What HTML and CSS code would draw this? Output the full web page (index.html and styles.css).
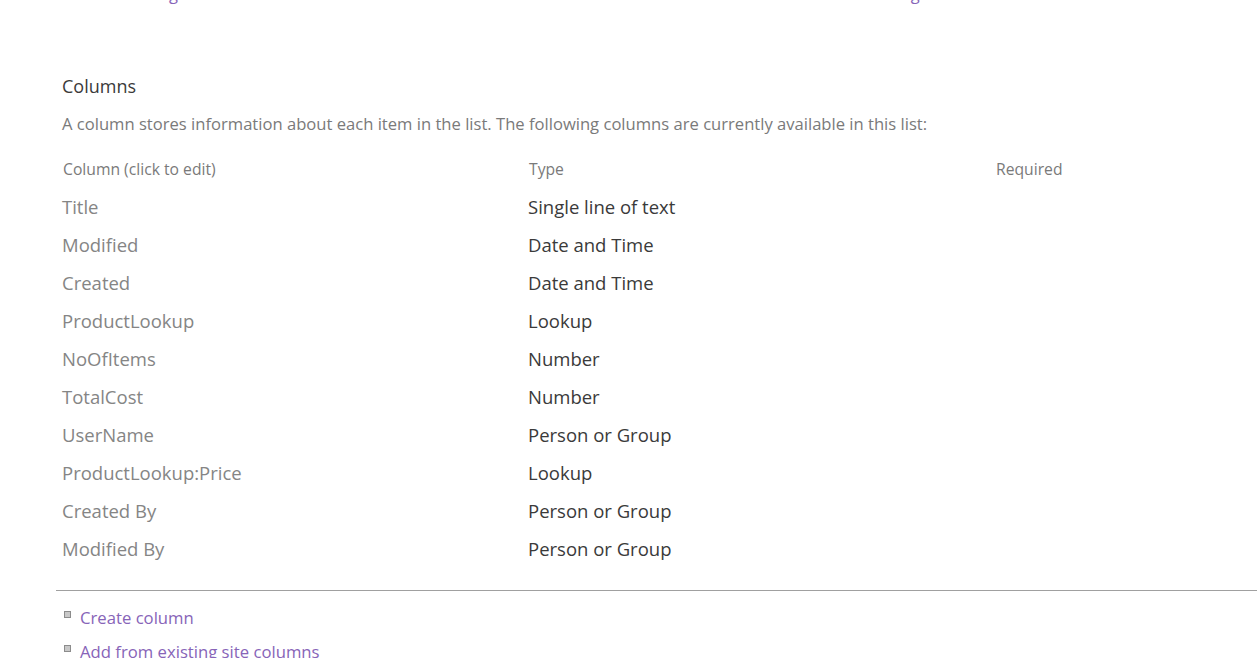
FILE: index.html
```html
<!DOCTYPE html>
<html>
<head>
<meta charset="utf-8">
<link rel="stylesheet" href="styles.css">
</head>
<body>
<div class="page">
  <div class="toplinks">
    <a class="toplink left">Form settings</a>
    <a class="toplink right">Workflow Settings</a>
  </div>
  <section class="columns">
    <h2 class="title">Columns</h2>
    <p class="desc">A column stores information about each item in the list. The following columns are currently available in this list:</p>
    <div class="grid">
      <div class="head">Column (click to edit)</div>
      <div class="head">Type</div>
      <div class="head">Required</div>

      <div class="name">Title</div><div class="type">Single line of text</div><div class="req"></div>
      <div class="name">Modified</div><div class="type">Date and Time</div><div class="req"></div>
      <div class="name">Created</div><div class="type">Date and Time</div><div class="req"></div>
      <div class="name">ProductLookup</div><div class="type">Lookup</div><div class="req"></div>
      <div class="name">NoOfItems</div><div class="type">Number</div><div class="req"></div>
      <div class="name">TotalCost</div><div class="type">Number</div><div class="req"></div>
      <div class="name">UserName</div><div class="type">Person or Group</div><div class="req"></div>
      <div class="name">ProductLookup:Price</div><div class="type">Lookup</div><div class="req"></div>
      <div class="name">Created By</div><div class="type">Person or Group</div><div class="req"></div>
      <div class="name">Modified By</div><div class="type">Person or Group</div><div class="req"></div>
    </div>
  </section>
  <hr class="sep">
  <ul class="actions">
    <li><span class="bullet"></span><a>Create column</a></li>
    <li><span class="bullet"></span><a>Add from existing site columns</a></li>
  </ul>
</div>
</body>
</html>
```
FILE: styles.css
```css
html, body {
  margin: 0;
  padding: 0;
  background: #fff;
  overflow: hidden;
}
body {
  font-family: "Open Sans", "Noto Sans", sans-serif;
  width: 1257px;
  height: 658px;
}
.page {
  padding-left: 56px;
}
.toplinks {
  height: 6px;
  position: relative;
  overflow: hidden;
}
.toplink {
  position: absolute;
  font-size: 16.5px;
  line-height: 20px;
  color: #8764b8;
  white-space: nowrap;
}
.toplink.left { left: 25px; top: -16px; }
.toplink.right { left: 733px; top: -16px; }
.columns {
  padding-left: 6px;
  padding-top: 68px;
}
.title {
  margin: 0;
  font-size: 18px;
  font-weight: 400;
  line-height: 24px;
  color: #3a3a3a;
  height: 24px;
}
.desc {
  margin: 16px 0 0;
  font-size: 16.6px;
  line-height: 20px;
  color: #7a7a7a;
  white-space: nowrap;
}
.grid {
  margin-top: 25px;
  display: grid;
  grid-template-columns: 466px 467px auto;
}
.head {
  font-size: 15.7px;
  line-height: 20px;
  color: #7a7a7a;
  height: 20px;
  padding-left: 1px;
  margin-bottom: 9px;
  white-space: nowrap;
}
.name, .type, .req {
  font-size: 18.5px;
  line-height: 38px;
  height: 38px;
  white-space: nowrap;
}
.name { color: #858585; }
.type { color: #3a3a3a; }
.sep {
  margin: 22px 0 0;
  border: 0;
  border-top: 1px solid #a0a0a0;
  height: 0;
}
.actions {
  list-style: none;
  margin: 11px 0 0;
  padding: 0 0 0 8px;
}
.actions li {
  display: flex;
  align-items: center;
  height: 34px;
  font-size: 16.7px;
  color: #8764b8;
}
.actions a { color: #8764b8; margin-top: -4px; }
.bullet {
  width: 5px;
  height: 5px;
  border: 1px solid #8c8c8c;
  background: #c8c8c8;
  margin-right: 9px;
  margin-top: -10px;
  flex: none;
}
```
